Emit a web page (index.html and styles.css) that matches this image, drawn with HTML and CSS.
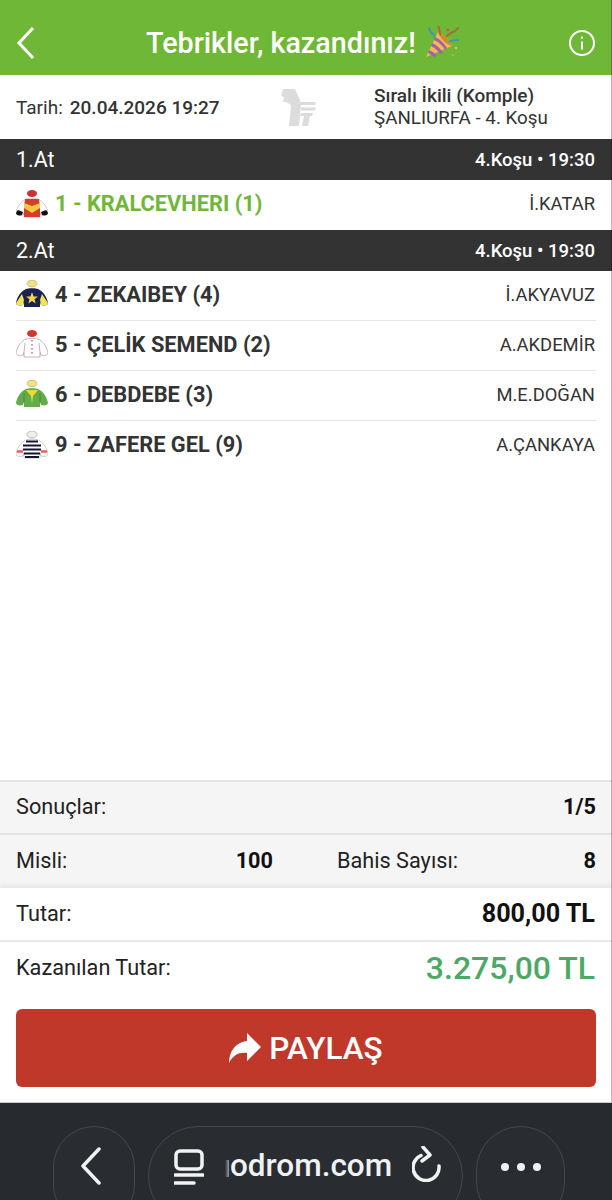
FILE: index.html
```html
<!doctype html>
<html lang="tr">
    <head>
        <meta charset="UTF-8" />
        <meta name="viewport" content="width=device-width, initial-scale=1" />
        <link rel="stylesheet" href="styles.css">
        <title>Tebrikler, kazandınız!</title>
    </head>
    <body>
        <div id="page">
            <header class="top-bar">
                <svg class="top-back" viewBox="0 0 20 34"><path d="M17 2 3 17l14 15" /></svg>
                <h1 class="top-title">Tebrikler, kazandınız!</h1>
                <!-- party popper -->
                <svg class="popper" viewBox="0 0 38 34">
                    <path d="M3 32 15 7c5 1 12 8 14 14z" fill="#f0bd4c" />
                    <path d="M15 7c5 1 12 8 14 14-6-1-12-8-14-14z" fill="#c98f2e" />
                    <path d="M6 25c3 1 6 3 8 6l-3 1c-2-2-4-3-6-4zM9 18c5 2 8 5 11 10l-3 1c-3-4-5-6-9-8zM12 12c5 2 9 6 12 11l-2 2c-3-5-6-8-11-10z" fill="#a45fb0" />
                    <path d="M5 3c3 0 1 4 4 5s2 3 3 4" fill="none" stroke="#3f97b8" stroke-width="2" />
                    <path d="M15 1c3 3 0 6 3 9" fill="none" stroke="#b8603a" stroke-width="2" />
                    <path d="M36 3c-3 0-3 4-6 4s-4 4-7 4" fill="none" stroke="#9a7136" stroke-width="2" />
                    <path d="M26 17c3-2 6-2 10-2" fill="none" stroke="#3f97b8" stroke-width="2" />
                    <circle cx="33" cy="23" r="1.2" fill="#e6c14c" /><circle cx="30" cy="30" r="1.2" fill="#c7a73a" /><circle cx="25" cy="5" r="1.2" fill="#d8503a" />
                </svg>
                <svg class="top-info" viewBox="0 0 28 28">
                    <circle cx="14" cy="14" r="12" />
                    <path d="M14 12.500v8" />
                    <path d="M14 7.500v2.200" />
                </svg>
            </header>

            <section class="info-row">
                <div class="info-date"><span>Tarih:</span><b>20.04.2026 19:27</b></div>
                <svg class="info-logo" viewBox="0 0 36 38">
                    <path d="M3 1h12l5 11 1 4-2 22H9l2-21-5-3H3l1-5-3-1z" fill="#dcdcdc" />
                    <path d="M21 14h15l-1 3H21zM21 19.500h15l-1 3H21zM21 25h12l-1 3h-2l-2 10h-6l2-10h-4z" fill="#dcdcdc" />
                </svg>
                <div class="info-race">
                    <b>Sıralı İkili (Komple)</b>
                    <span>ŞANLIURFA - 4. Koşu</span>
                </div>
            </section>

            <div class="leg-bar"><span class="leg-name">1.At</span><span class="leg-time">4.Koşu • 19:30</span></div>
            <div class="horse-row winner">
                <svg class="silk" viewBox="0 0 32 28">
                    <ellipse cx="16" cy="3.500" rx="5" ry="3.400" fill="#c8322c" />
                    <path d="M10 9c2-1 10-1 12 0 5 2 9 8 10 14 0 2-4 3-7 2l-1-3v5H8v-5l-1 3c-3 1-7 0-7-2C1 17 5 11 10 9z" fill="#fff" stroke="#999" stroke-width=".5" />
                    <path d="M9 9h14l1 8v10H8V17z" fill="#d63c2e" />
                    <path d="M8 13l8 3 8-3v5l-8 5-8-5z" fill="#f4c93e" />
                    <path d="M0 23c.5-1 1-2 2-3l5 2-1 3c-3 1-6 0-6-2zM32 23c-.5-1-1-2-2-3l-5 2 1 3c3 1 6 0 6-2z" fill="#111" />
                </svg>
                <span class="horse-name">1 - KRALCEVHERI (1)</span>
                <span class="jockey">İ.KATAR</span>
            </div>

            <div class="leg-bar"><span class="leg-name">2.At</span><span class="leg-time">4.Koşu • 19:30</span></div>
            <div class="horse-row">
                <svg class="silk" viewBox="0 0 32 28">
                    <ellipse cx="16" cy="3.500" rx="5" ry="3.400" fill="#f3e27a" stroke="#998" stroke-width=".5" />
                    <path d="M10 9c2-1 10-1 12 0 5 2 9 8 10 14 0 2-4 3-7 2l-1-3v5H8v-5l-1 3c-3 1-7 0-7-2C1 17 5 11 10 9z" fill="#1b2150" />
                    <path d="M6 14 0 23c0 2 4 3 7 2l1-5zM26 14l6 9c0 2-4 3-7 2l-1-5z" fill="#f2e25a" />
                    <path d="m16 12 1.600 4.400 4.400.2-3.500 2.700 1.200 4.300-3.700-2.500-3.700 2.500 1.200-4.300-3.500-2.700 4.400-.2z" fill="#f0d84a" />
                </svg>
                <span class="horse-name">4 - ZEKAIBEY (4)</span>
                <span class="jockey">İ.AKYAVUZ</span>
            </div>
            <div class="horse-row">
                <svg class="silk" viewBox="0 0 32 28">
                    <ellipse cx="16" cy="3.500" rx="5" ry="3.400" fill="#d2372c" />
                    <path d="M10 9c2-1 10-1 12 0 5 2 9 8 10 14 0 2-4 3-7 2l-1-3v5H8v-5l-1 3c-3 1-7 0-7-2C1 17 5 11 10 9z" fill="#fff" stroke="#a99" stroke-width=".7" />
                    <path d="M9 13l-1 9M23 13l1 9" fill="none" stroke="#c99" stroke-width=".8" />
                    <path d="M16 10v16" fill="none" stroke="#c66" stroke-width="1.400" stroke-dasharray="1.500 2.500" />
                </svg>
                <span class="horse-name">5 - ÇELİK SEMEND (2)</span>
                <span class="jockey">A.AKDEMİR</span>
            </div>
            <div class="horse-row">
                <svg class="silk" viewBox="0 0 32 28">
                    <ellipse cx="16" cy="3.500" rx="5" ry="3.400" fill="#f3e27a" stroke="#998" stroke-width=".5" />
                    <path d="M10 9c2-1 10-1 12 0 5 2 9 8 10 14 0 2-4 3-7 2l-1-3v5H8v-5l-1 3c-3 1-7 0-7-2C1 17 5 11 10 9z" fill="#62ad4a" />
                    <path d="M10 10h12l-5 6-1 8-1-8z" fill="#eadb3c" />
                    <path d="M8 13v9M24 13v9" fill="none" stroke="#3c7a30" stroke-width=".7" />
                </svg>
                <span class="horse-name">6 - DEBDEBE (3)</span>
                <span class="jockey">M.E.DOĞAN</span>
            </div>
            <div class="horse-row last-row">
                <svg class="silk" viewBox="0 0 32 28">
                    <ellipse cx="16" cy="3.500" rx="5" ry="3.400" fill="#eee" stroke="#999" stroke-width=".6" />
                    <path d="M10 9c2-1 10-1 12 0 5 2 9 8 10 14 0 2-4 3-7 2l-1-3v5H8v-5l-1 3c-3 1-7 0-7-2C1 17 5 11 10 9z" fill="#fff" stroke="#999" stroke-width=".5" />
                    <path d="M10 10.500h12M7 14.500h18M7 18.500h18M8 22.500h16M9 26h14" fill="none" stroke="#16162a" stroke-width="2.100" />
                    <path d="M1 20.500h6M25 20.500h6" fill="none" stroke="#e0605a" stroke-width="2.400" />
                </svg>
                <span class="horse-name">9 - ZAFERE GEL (9)</span>
                <span class="jockey">A.ÇANKAYA</span>
            </div>

            <div class="spacer"></div>

            <div class="sum-row gray">
                <span>Sonuçlar:</span><b>1/5</b>
            </div>
            <div class="sum-row gray last-gray">
                <div class="sum-half left-half"><span>Misli:</span><b>100</b></div>
                <div class="sum-half"><span>Bahis Sayısı:</span><b>8</b></div>
            </div>
            <div class="sum-row white">
                <span>Tutar:</span><b class="amount">800,00 TL</b>
            </div>
            <div class="sum-row white won">
                <span>Kazanılan Tutar:</span><b class="won-amount">3.275,00 TL</b>
            </div>

            <div class="share-wrap">
                <button class="share-btn">
                    <svg class="share-icon" viewBox="0 0 32 30"><path d="M18 0 32 14 18 28v-8C10 19 4 22 0 30 0 18 7 9 18 8z" /></svg>
                    PAYLAŞ
                </button>
            </div>

            <!-- browser chrome at the bottom -->
            <nav class="browser-bar">
                <div class="round-btn back-btn">
                    <svg class="chrome-icon back-icon" viewBox="0 0 22 38"><path d="M19 2 3 19l16 17" /></svg>
                </div>
                <div class="url-pill">
                    <svg class="chrome-icon tab-icon" viewBox="0 0 30 36">
                        <rect x="2" y="2" width="26" height="18" rx="4" />
                        <path d="M1 26h28M1 34h19" />
                    </svg>
                    <span class="url-text">odrom.com</span>
                    <svg class="chrome-icon reload-icon" viewBox="0 0 30 36">
                        <path d="M9 9.500A13 13 0 1 0 27 20" />
                        <path d="M11 1l7 8-8 6" />
                    </svg>
                </div>
                <div class="round-btn more-btn"><i></i><i></i><i></i></div>
            </nav>
        </div>
    </body>
</html>
```

FILE: styles.css
```css
body,
html,
div,
h1 {
    padding: 0;
    margin: 0;
}
body {
    font-family: Roboto, "Liberation Sans", sans-serif;
    background-color: #fff;
    overflow: hidden;
}
b {
    font-weight: 700;
}
#page {
    position: relative;
    width: 612px;
    height: 1200px;
    display: flex;
    flex-direction: column;
    color: #333;
}
/* thin scrollbar-ish line down the right edge of the screen */
#page::after {
    content: "";
    position: absolute;
    top: 0;
    right: 0;
    bottom: 98px;
    width: 1px;
    background: rgba(0, 0, 0, 0.28);
}

/* -- HEADER -- */

.top-bar {
    height: 75px;
    flex: none;
    background: #6fb736;
    color: #fff;
    display: flex;
    align-items: center;
    padding: 10px 16px 0;
    box-sizing: border-box;
}
.top-back {
    width: 20px;
    height: 34px;
    fill: none;
    stroke: #fff;
    stroke-width: 3;
    margin-right: 110px;
}
.top-title {
    font-size: 28.7px;
    font-weight: 500;
    white-space: nowrap;
}
.popper {
    width: 38px;
    height: 34px;
    margin-left: 7px;
    margin-top: -2px;
}
.top-info {
    width: 28px;
    height: 28px;
    margin-left: auto;
    fill: none;
    stroke: #fff;
    stroke-width: 2;
}

.info-row {
    height: 64px;
    flex: none;
    display: flex;
    align-items: center;
    padding: 0 16px;
    box-sizing: border-box;
}
.info-date {
    width: 264px;
    display: flex;
    gap: 7px;
    font-size: 19px;
    white-space: nowrap;
    color: #333;
}
.info-date b {
    font-weight: 500;
}
.info-logo {
    width: 36px;
    height: 38px;
}
.info-race {
    margin-left: 58px;
    display: flex;
    flex-direction: column;
    font-size: 18.8px;
    line-height: 22px;
}
.info-race b {
    font-weight: 500;
    font-size: 19px;
}

/* -- HORSES -- */

.leg-bar {
    height: 41px;
    flex: none;
    background: #333;
    color: #fff;
    display: flex;
    align-items: center;
    justify-content: space-between;
    padding: 0 16px;
    box-sizing: border-box;
}
.leg-name {
    font-size: 21.5px;
}
.leg-time {
    font-size: 18.5px;
    font-weight: 500;
    margin-right: 1px;
}
.horse-row {
    height: 50px;
    flex: none;
    margin: 0 16px;
    padding-bottom: 3px;
    display: flex;
    align-items: center;
    border-bottom: 1.5px solid #e6e6e6;
    box-sizing: border-box;
}
.last-row,
.winner {
    border-bottom: none;
}
.silk {
    width: 32px;
    height: 28px;
    margin-right: 7px;
}
.horse-name {
    font-size: 21.8px;
    font-weight: 700;
    color: #333;
}
.winner .horse-name {
    color: #6fb736;
}
.jockey {
    margin: 0 1px 0 auto;
    font-size: 18.4px;
    color: #333;
}

.spacer {
    flex: 1;
}

/* -- SUMMARY -- */

.sum-row {
    height: 53px;
    flex: none;
    display: flex;
    align-items: center;
    justify-content: space-between;
    padding: 0 16px;
    box-sizing: border-box;
    font-size: 21.7px;
    color: #222;
}
.sum-row b {
    color: #111;
    font-weight: 700;
}
.gray {
    background: #f5f5f6;
    border-top: 2px solid #e4e4e6;
    padding-bottom: 2px;
}
.last-gray {
    height: 55px;
    gap: 64px;
}
.sum-half {
    flex: 1;
    display: flex;
    align-items: center;
    justify-content: space-between;
}
.left-half {
    flex: 0 0 257px;
}
.white {
    height: 52px;
    padding-bottom: 2px;
    background: #fff;
    box-shadow: 0 -3px 5px rgba(0, 0, 0, 0.06);
}
.won {
    height: 61px;
    padding-bottom: 8px;
    border-top: 2px solid #e8e8e8;
    box-shadow: none;
}
.sum-row .amount {
    font-size: 25.2px;
    margin-right: 1px;
}
.sum-row .won-amount {
    font-size: 32px;
    color: #4da868;
    font-weight: 500;
    margin-right: 1px;
}

.share-wrap {
    flex: none;
    padding: 8px 16px 15px;
}
.share-btn {
    width: 100%;
    height: 78px;
    display: flex;
    align-items: center;
    justify-content: center;
    gap: 8px;
    background: #c03829;
    border: none;
    border-radius: 6px;
    color: #fff;
    font-family: inherit;
    font-size: 31.5px;
    font-weight: 500;
}
.share-icon {
    width: 32px;
    height: 30px;
    fill: #fff;
}

/* -- BROWSER BAR -- */

.browser-bar {
    height: 98px;
    flex: none;
    overflow: hidden;
    background: #272a2f;
    display: flex;
    gap: 13px;
    padding: 23px 0 0 53px;
    box-sizing: border-box;
    color: #f1f2f4;
    border-top: 1px solid #c9cacc;
}
.round-btn,
.url-pill {
    height: 100px;
    flex: none;
    border: 1.5px solid #44474c;
    border-radius: 50px;
    box-sizing: border-box;
    display: flex;
    align-items: flex-start;
    background: #292c31;
}
.round-btn {
    justify-content: center;
}
.back-btn {
    width: 82px;
    padding-right: 7px;
}
.more-btn {
    width: 89px;
    gap: 8px;
    padding-top: 36px;
}
.more-btn i {
    width: 8px;
    height: 8px;
    border-radius: 50%;
    background: #f1f2f4;
}
.url-pill {
    width: 315px;
    padding-left: 25px;
}
.chrome-icon {
    fill: none;
    stroke: #f1f2f4;
    stroke-width: 3.5;
    stroke-linecap: round;
    stroke-linejoin: round;
}
.back-icon {
    width: 22px;
    height: 38px;
    margin-top: 20px;
}
.tab-icon {
    width: 30px;
    height: 36px;
    margin-top: 22px;
    flex: none;
}
.url-text {
    margin: 19px 0 0 26px;
    width: 161px;
    font-size: 31.5px;
    line-height: 40px;
    font-weight: 500;
    white-space: nowrap;
    position: relative;
}
/* the url is scrolled, only a faded sliver of the previous letter shows */
.url-text::before {
    content: "";
    position: absolute;
    left: -5px;
    top: 14px;
    width: 4px;
    height: 17px;
    background: linear-gradient(90deg, transparent, #9a9c9f);
}
.reload-icon {
    width: 30px;
    height: 36px;
    margin: 19px 0 0 21px;
    flex: none;
}
```
